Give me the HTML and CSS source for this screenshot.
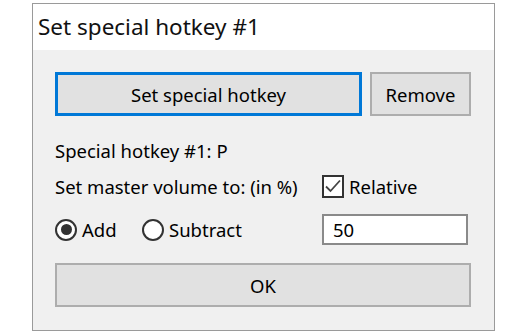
FILE: index.html
```html
<!DOCTYPE html>
<html>
<head>
<meta charset="utf-8">
<link rel="stylesheet" href="styles.css">
</head>
<body>
<div class="window">
  <div class="titlebar">Set special hotkey #1</div>
  <div class="content">
    <div class="btnrow">
      <div class="btn btn-default">Set special hotkey</div>
      <div class="btn btn-remove">Remove</div>
    </div>
    <div class="label1">Special hotkey #1: P</div>
    <div class="grid">
      <div class="cell">Set master volume to: (in %)</div>
      <div class="cell check">
        <svg class="checkbox" width="22" height="23" viewBox="0 0 22 23">
          <rect x="1" y="1" width="20" height="21" fill="#fff" stroke="#333" stroke-width="2"/>
          <path d="M4 11.5 L8.5 16 L18 5.5" fill="none" stroke="#444" stroke-width="1.8"/>
        </svg>
        <span>Relative</span>
      </div>
      <div class="cell radios">
        <div class="ritem first"><span class="radio on"></span><span>Add</span></div>
        <div class="ritem"><span class="radio"></span><span>Subtract</span></div>
      </div>
      <div class="cell">
        <div class="edit">50</div>
      </div>
    </div>
    <div class="btn btn-ok">OK</div>
  </div>
</div>
</body>
</html>
```
FILE: styles.css
```css
html, body {
  margin: 0;
  padding: 0;
  background: #fff;
}
body {
  font-family: "Noto Sans", "Open Sans", sans-serif;
  color: #000;
  width: 528px;
  height: 336px;
  overflow: hidden;
}
.window {
  margin-left: 32px;
  margin-top: 3px;
  width: 461px;
  height: 326px;
  border: 1px solid #9a9a9a;
  background: #f0f0f0;
  display: flex;
  flex-direction: column;
}
.titlebar {
  height: 46px;
  background: #fff;
  font-size: 22.5px;
  line-height: 45px;
  padding-left: 5px;
  color: #111;
}
.content {
  padding: 22px 22px 0 22px;
  font-size: 18.5px;
  display: flex;
  flex-direction: column;
}
.btnrow {
  display: flex;
  gap: 8px;
}
.btn {
  box-sizing: border-box;
  background: #e1e1e1;
  border: 2px solid #adadad;
  display: flex;
  align-items: center;
  justify-content: center;
  font-size: 18.5px;
}
.btn-default {
  width: 307px;
  height: 44px;
  border: 3px solid #0078d7;
}
.btn-remove {
  width: 101px;
  height: 44px;
}
.label1 {
  margin-top: 24px;
  height: 22px;
  line-height: 22px;
}
.grid {
  display: grid;
  grid-template-columns: 267px 1fr;
  grid-template-rows: 24px 31px;
  row-gap: 16px;
  margin-top: 12px;
}
.cell {
  display: flex;
  align-items: center;
}
.check .checkbox {
  margin-right: 5px;
}
.ritem {
  display: flex;
  align-items: center;
}
.ritem.first {
  width: 87px;
}
.radio {
  box-sizing: border-box;
  width: 22px;
  height: 22px;
  border: 2px solid #333;
  border-radius: 50%;
  background: #fff;
  display: flex;
  align-items: center;
  justify-content: center;
  margin-right: 5px;
}
.radio.on::after {
  content: "";
  width: 11px;
  height: 11px;
  border-radius: 50%;
  background: #333;
}
.edit {
  box-sizing: border-box;
  width: 146px;
  height: 31px;
  border: 2px solid #8a8a8a;
  background: #fff;
  padding-left: 9px;
  display: flex;
  align-items: center;
}
.btn-ok {
  margin-top: 18px;
  width: 416px;
  height: 44px;
}
```
